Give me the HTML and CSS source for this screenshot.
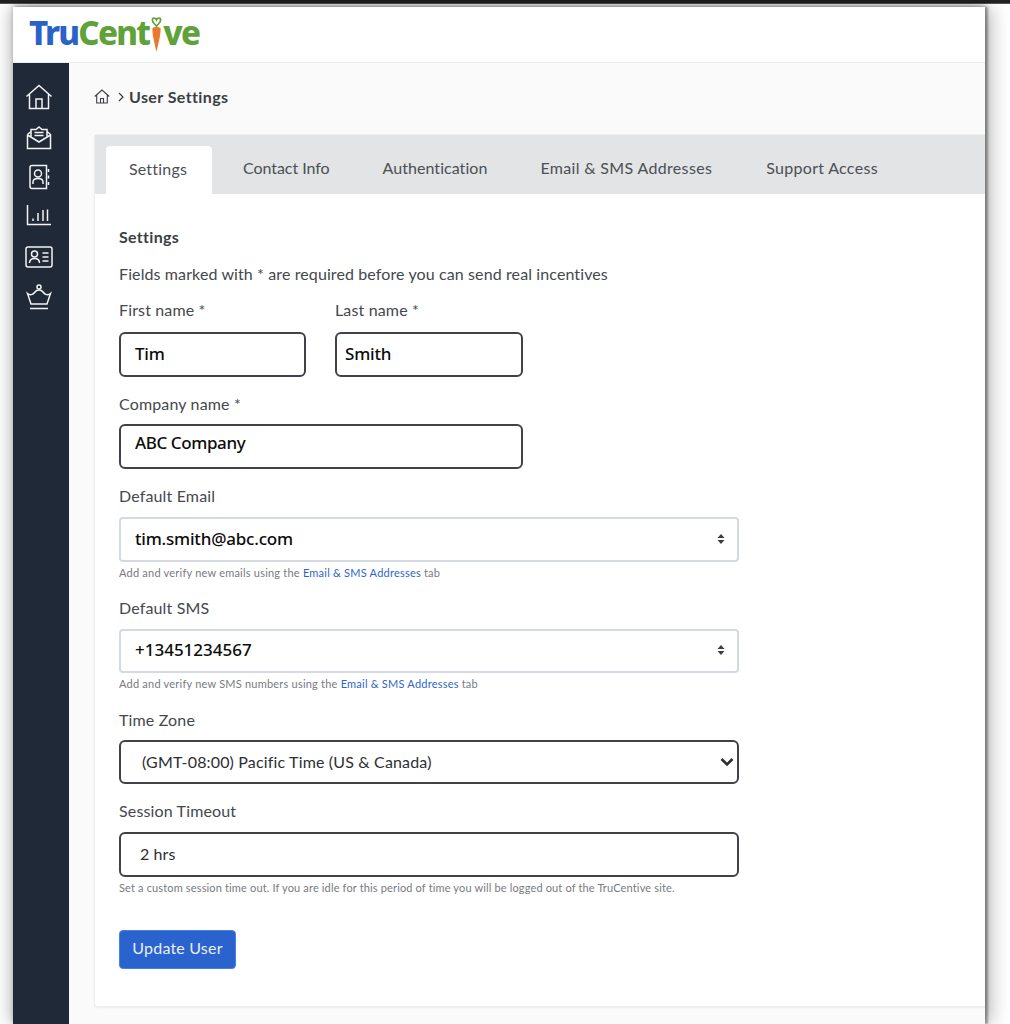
FILE: index.html
```html
<!DOCTYPE html>
<html lang="en">
<head>
<meta charset="utf-8">
<title>User Settings</title>
<link rel="stylesheet" href="styles.css">
</head>
<body>
<div class="topstrip"></div>
<div class="window">
  <header class="header">
    <div class="logo"><span class="logo-blue">Tru</span><span class="logo-green">Cent</span><svg class="carrot" viewBox="0 0 14 40" width="13" height="37"><path d="M7 11C4.800 8 2.200 7 2.500 3.800 2.800 1.800 5.800 1.500 7 4.200 8.200 1.500 11.200 1.800 11.500 3.800 11.800 7 9.200 8 7 11Z" fill="none" stroke="#5fa239" stroke-width="1.800"/><path d="M2.500 13.500C4 11.500 10 11.500 11.500 13.500 11.500 21 8.500 32 7 39 5.500 32 2.500 21 2.500 13.500Z" fill="#e8792f"/></svg><span class="logo-green">ve</span></div>
  </header>
  <div class="layout">
    <nav class="sidebar">
      <div class="nav-cell"><svg class="nav-icon" viewBox="0 0 28 26" width="28" height="26"><path d="M1.500 12.500 14 1.500 26.500 12.500M4.500 10.500V24.500H23.500V10.500M11 24.500V15H17V24.500"/></svg></div>
      <div class="nav-cell"><svg class="nav-icon" viewBox="0 0 26 26" width="26" height="26"><path d="M1.500 10.500V24.500H24.500V10.500L21 7.500M1.500 10.500 5 7.500M1.500 11 13 18 24.500 11M5 13V5.500H10L13 3 16 5.500H21V13M8.500 8.500H17.500M8.500 11.500H17.500"/></svg></div>
      <div class="nav-cell"><svg class="nav-icon" viewBox="0 0 24 26" width="24" height="26"><path d="M5 1.500H19.500V24.500H5C3.800 24.500 3 23.700 3 22.500V3.500C3 2.300 3.800 1.500 5 1.500ZM21.500 5V8M21.500 11.500V14.500M21.500 18V21"/><circle cx="11" cy="9.500" r="3.500"/><path d="M6 20V18C6 15.500 8 14.500 11 14.500S16 15.500 16 18V20"/></svg></div>
      <div class="nav-cell nav-chart"><svg class="nav-icon" viewBox="0 0 26 22" width="26" height="22"><path d="M1.500 1V20.500H25M7 17V14.500M12 17V9M17 17V6M21.500 17V5.500"/></svg></div>
      <div class="nav-cell"><svg class="nav-icon" viewBox="0 0 28 22" width="28" height="22"><rect x="1" y="1" width="26" height="20" rx="2"/><circle cx="9.500" cy="8" r="3"/><path d="M4.500 17C4.500 13.800 6.500 12.500 9.500 12.500S14.500 13.800 14.500 17M17.500 7H23.500M17.500 11H23.500M17.500 15H23.500"/></svg></div>
      <div class="nav-cell"><svg class="nav-icon" viewBox="0 0 26 26" width="26" height="26"><circle cx="13" cy="3" r="2"/><path d="M1.500 9.500C4 11.500 7 11 9 8 10 6.500 11 6 13 6S16 6.500 17 8C19 11 22 11.500 24.500 9.500L21 20H5ZM4 24.500H22"/></svg></div>
    </nav>
    <main class="main">
      <div class="breadcrumb">
        <svg class="crumb-home" viewBox="0 0 16 15" width="16" height="15"><path d="M.7 7.500 8 1 15.300 7.500M2.700 6V14H13.300V6M6.500 14V9.500H9.500V14"/></svg>
        <svg class="crumb-sep" viewBox="0 0 6 10" width="6" height="10"><path d="M1 1 5 5 1 9"/></svg>
        <span class="crumb-text">User Settings</span>
      </div>
      <section class="card">
        <div class="tabs">
          <div class="tab tab-active">Settings</div>
          <div class="tab tab-contact">Contact Info</div>
          <div class="tab tab-auth">Authentication</div>
          <div class="tab tab-email">Email &amp; SMS Addresses</div>
          <div class="tab tab-support">Support Access</div>
        </div>
        <form class="form">
          <h2 class="title">Settings</h2>
          <p class="intro">Fields marked with * are required before you can send real incentives</p>
          <div class="name-row">
            <div class="field-name">
              <label class="label">First name *</label>
              <div class="control control-dark control-name">Tim</div>
            </div>
            <div class="field-name">
              <label class="label">Last name *</label>
              <div class="control control-dark control-name control-last">Smith</div>
            </div>
          </div>
          <label class="label label-company">Company name *</label>
          <div class="control control-dark control-company">ABC Company</div>
          <label class="label label-email">Default Email</label>
          <div class="control control-light control-wide">tim.smith@abc.com
            <svg class="updown" viewBox="0 0 8 12" width="8" height="12"><path d="M4 1 7.500 5H.5ZM4 11 .5 7H7.500Z"/></svg>
          </div>
          <p class="help">Add and verify new emails using the <a class="link">Email &amp; SMS Addresses</a> tab</p>
          <label class="label label-sms">Default SMS</label>
          <div class="control control-light control-wide control-sms">+13451234567
            <svg class="updown" viewBox="0 0 8 12" width="8" height="12"><path d="M4 1 7.500 5H.5ZM4 11 .5 7H7.500Z"/></svg>
          </div>
          <p class="help">Add and verify new SMS numbers using the <a class="link">Email &amp; SMS Addresses</a> tab</p>
          <label class="label label-zone">Time Zone</label>
          <div class="control control-dark control-wide control-zone">(GMT-08:00) Pacific Time (US &amp; Canada)
            <svg class="chevron" viewBox="0 0 14 10" width="14" height="10"><path d="M1.500 2 7 7.500 12.500 2"/></svg>
          </div>
          <label class="label label-session">Session Timeout</label>
          <div class="control control-dark control-wide control-session">2 hrs</div>
          <p class="help help-session">Set a custom session time out. If you are idle for this period of time you will be logged out of the TruCentive site.</p>
          <button class="button" type="button">Update User</button>
        </form>
      </section>
    </main>
  </div>
</div>
</body>
</html>
```

FILE: styles.css
```css
* { box-sizing: border-box; }
html, body { height: 100%; }
body {
  margin: 0;
  height: 1024px;
  overflow: hidden;
  background: #fff;
  font-family: "Lato", "Noto Sans", sans-serif;
  color: #44484d;
}
.topstrip {
  height: 4px;
  background: linear-gradient(#222 0, #222 75%, #888 100%);
}
.window {
  margin: 3px 0 0 13px;
  width: 972px;
  height: 1017px;
  box-shadow: 3px 0 2px rgba(0,0,0,.3), 6px 0 18px rgba(0,0,0,.28), -6px 0 14px rgba(0,0,0,.14), 0 -2px 4px rgba(0,0,0,.2);
  background: #fafafa;
  position: relative;
}
.header {
  height: 56px;
  background: #fff;
  border-bottom: 1px solid #ececec;
  padding: 4px 0 0 16px;
}
.logo {
  display: flex;
  align-items: flex-start;
  font-family: "Noto Sans", sans-serif;
  font-weight: 800;
  font-size: 33px;
  line-height: 44px;
  letter-spacing: -1.7px;
}
.logo-blue { color: #2a62c9; }
.logo-green { color: #5fa239; }
.carrot { margin: 5px 0 0 1px; flex: none; }
.layout { display: flex; height: 961px; }
.sidebar {
  width: 56px;
  background: #1f2937;
  display: flex;
  flex-direction: column;
  align-items: center;
  padding: 14px 5px 0 0;
  flex: none;
}
.nav-cell {
  height: 40px;
  display: flex;
  align-items: center;
  justify-content: center;
  flex: none;
}
.nav-chart { padding-bottom: 5px; }
.nav-icon { fill: none; stroke: #f2f3f4; stroke-width: 1.500; flex: none; }
.main { flex: 1; padding: 0 0 0 25px; min-width: 0; }
.breadcrumb {
  height: 71px;
  display: flex;
  align-items: center;
  padding-bottom: 4px;
}
.crumb-home { fill: none; stroke: #3c4046; stroke-width: 1.100; margin-right: 8px; }
.crumb-sep { fill: none; stroke: #3c4046; stroke-width: 1.200; margin-right: 5px; }
.crumb-text { font-weight: 700; font-size: 16px; color: #3a3f44; letter-spacing: .4px; }
.card {
  background: #fff;
  border: 1px solid #eceef0;
  border-right: 0;
  border-radius: 4px 0 0 4px;
  height: 873px;
  box-shadow: 0 1px 2px rgba(0,0,0,.06);
}
.tabs {
  height: 59px;
  background: #e2e4e6;
  display: flex;
  padding: 11px 0 0 11px;
  font-size: 16px;
}
.tab { color: #4b4f54; padding-top: 12px; white-space: nowrap; }
.tab-active {
  width: 106px;
  background: #fff;
  border-radius: 4px 4px 0 0;
  text-align: center;
  padding: 13px 2px 0 0;
  letter-spacing: .2px;
}
.tab-contact { margin-left: 31px; letter-spacing: -.05px; }
.tab-auth { margin-left: 53px; letter-spacing: .05px; }
.tab-email { margin-left: 53px; letter-spacing: .33px; }
.tab-support { margin-left: 54px; letter-spacing: .3px; }
.form { padding: 0 0 0 24px; }
.title {
  margin: 33px 0 0;
  font-size: 16px;
  line-height: 20px;
  font-weight: 700;
  color: #3a3f44;
  letter-spacing: .3px;
}
.intro {
  margin: 17px 0 0;
  font-size: 16px;
  line-height: 20px;
  letter-spacing: .11px;
}
.name-row { display: flex; gap: 29px; margin-top: 16px; }
.field-name { width: 187px; }
.label {
  display: block;
  font-size: 16px;
  line-height: 20px;
  letter-spacing: .15px;
}
.control {
  position: relative;
  display: flex;
  align-items: center;
  background: #fff;
  font-family: "Noto Sans", sans-serif;
  font-size: 17px;
  font-weight: 500;
  letter-spacing: -.2px;
  color: #0c0c0c;
  padding-left: 14px;
  padding-bottom: 2px;
}
.control-dark { border: 2px solid #3f4347; border-radius: 6px; }
.control-light { border: 2px solid #d5dae2; border-radius: 4px; }
.control-name { margin-top: 12px; height: 45px; }
.control-last { padding-left: 8px; width: 188px; }
.label-company { margin-top: 17px; }
.control-company { margin-top: 10px; width: 404px; height: 45px; padding-bottom: 9px; letter-spacing: -.4px; }
.label-email { margin-top: 17px; }
.control-wide { width: 620px; margin-top: 11px; height: 45px; justify-content: space-between; padding-right: 13px; }
.control-sms { height: 44px; padding-bottom: 3px; letter-spacing: 0; }
.label-sms { margin-top: 18px; }
.help {
  margin: 4px 0 0;
  font-size: 11px;
  line-height: 14px;
  color: #777b80;
  letter-spacing: .22px;
}
.link { color: #2f66cc; }
.updown { fill: #3a3d41; flex: none; margin-right: -1px; }
.label-zone { margin-top: 19px; margin-bottom: -1px; }
.control-zone {
  height: 44px;
  padding: 0 3px 1px 21px;
  font-family: "Lato", sans-serif;
  font-size: 16px;
  font-weight: 400;
  letter-spacing: .16px;
  color: #2d2f33;
}
.chevron { fill: none; stroke: #2b2d30; stroke-width: 2.600; flex: none; }
.label-session { margin-top: 17px; }
.control-session {
  padding: 0 0 2px 19px;
  font-family: "Lato", sans-serif;
  font-size: 16px;
  font-weight: 400;
  letter-spacing: .1px;
  color: #2d2f33;
}
.help-session { margin-top: 4px; letter-spacing: .15px; }
.button {
  display: block;
  margin-top: 35px;
  width: 117px;
  height: 39px;
  padding: 0 0 5px;
  background: #2a62ce;
  border: 1px solid #4a80e6;
  border-radius: 4px;
  color: #e9effb;
  font-family: "Lato", sans-serif;
  font-size: 16px;
  letter-spacing: .2px;
}
```
